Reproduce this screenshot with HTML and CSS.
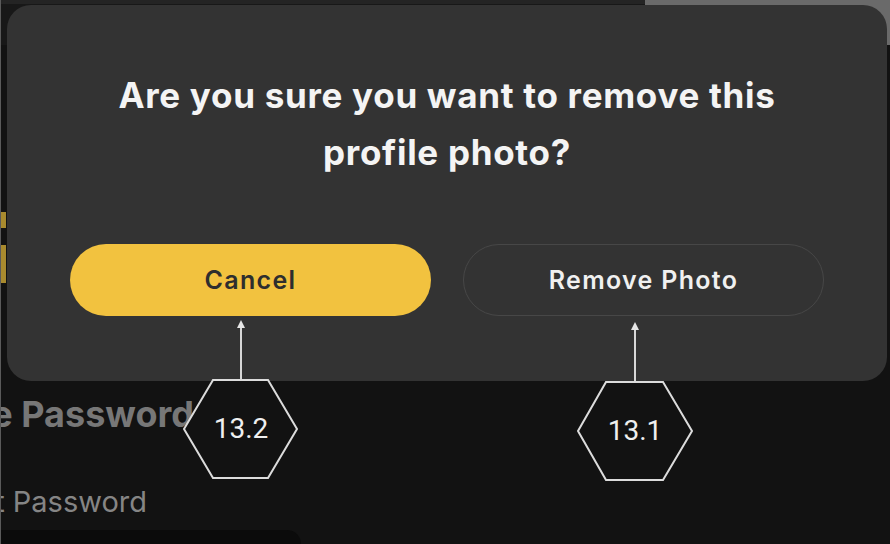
FILE: index.html
```html
<!DOCTYPE html>
<html lang="en">
<head>
<meta charset="utf-8">
<title>Remove profile photo</title>
<link rel="stylesheet" href="styles.css">
</head>
<body>
<div class="page">
  <div class="topbar"><div class="topbar-right"></div></div>
  <div class="marks">
    <div class="mark mark-a"></div>
    <div class="mark mark-b"></div>
  </div>
  <div class="settings">
    <div class="heading-row"><h2 class="heading">Change Password</h2></div>
    <div class="label-row"><span class="label">Current Password</span></div>
    <div class="input-stub"></div>
  </div>
</div>

<div class="dialog" role="dialog">
  <h1 class="dialog-title">Are you sure you want to remove this<br>profile photo?</h1>
  <div class="dialog-actions">
    <button class="btn btn-primary">Cancel</button>
    <button class="btn btn-outline">Remove Photo</button>
  </div>
</div>

<div class="callout callout-cancel">
  <svg class="callout-svg" width="120" height="164" viewBox="0 0 120 164">
    <line x1="60" y1="9" x2="60" y2="62" class="c-line"/>
    <polygon points="56,10 60,2 64,10" class="c-head"/>
    <polygon points="3,111 32,62 87,62 116,111 87,160 32,160" class="c-hex"/>
  </svg>
  <span class="callout-label">13.2</span>
</div>
<div class="callout callout-remove">
  <svg class="callout-svg" width="120" height="164" viewBox="0 0 120 164">
    <line x1="60" y1="9" x2="60" y2="62" class="c-line"/>
    <polygon points="56,10 60,2 64,10" class="c-head"/>
    <polygon points="3,111 31,62 88,62 117,111 88,160 31,160" class="c-hex"/>
  </svg>
  <span class="callout-label">13.1</span>
</div>
</body>
</html>
```

FILE: styles.css
```css
* { box-sizing: border-box; }
html, body { margin: 0; padding: 0; }
body {
  width: 890px;
  height: 544px;
  overflow: hidden;
  position: relative;
  background: #121212;
  font-family: Inter, "Noto Sans", "Liberation Sans", sans-serif;
  border-left: 1px solid #5a5a5a;
}
.page {
  display: flex;
  flex-direction: column;
  height: 100%;
}
.topbar {
  height: 45px;
  display: flex;
  justify-content: flex-end;
  background: #181818;
  border-top: 4px solid #242424;
}
.topbar-right {
  width: 245px;
  margin-top: -4px;
  background: #6a6a6a;
}
.marks {
  display: flex;
  flex-direction: column;
  gap: 17px;
  margin-top: 167px;
  width: 5px;
}
.mark { background: #a88a2e; }
.mark-a { height: 16px; }
.mark-b { height: 38px; }
.settings {
  display: flex;
  flex-direction: column;
  margin-top: 111px;
  flex: 1;
}
.heading-row {
  width: 193px;
  display: flex;
  justify-content: flex-end;
}
.heading {
  margin: 0;
  white-space: nowrap;
  font-size: 36px;
  line-height: 40px;
  font-weight: 700;
  color: #777777;
}
.label-row {
  width: 146px;
  display: flex;
  justify-content: flex-end;
  margin-top: 52px;
}
.label {
  white-space: nowrap;
  font-size: 29px;
  line-height: 32px;
  font-weight: 400;
  color: #858585;
}
.input-stub {
  margin-top: auto;
  width: 300px;
  height: 14px;
  background: #0b0b0b;
  border-top-right-radius: 14px;
}

/* modal overlay */
.dialog {
  position: absolute;
  left: 6px;
  top: 5px;
  width: 880px;
  height: 376px;
  background: #333333;
  border-radius: 24px;
  display: flex;
  flex-direction: column;
  align-items: center;
  padding-top: 62px;
}
.dialog-title {
  margin: 0;
  text-align: center;
  color: #f4f4f4;
  font-size: 35px;
  line-height: 57px;
  font-weight: 700;
  letter-spacing: 0.7px;
}
.dialog-actions {
  display: flex;
  gap: 32px;
  margin-top: 63px;
}
.btn {
  width: 361px;
  height: 72px;
  border-radius: 36px;
  font-family: Inter, "Noto Sans", "Liberation Sans", sans-serif;
  font-size: 25px;
  font-weight: 600;
  letter-spacing: 1.3px;
  cursor: pointer;
}
.btn-primary {
  background: #f2c23f;
  color: #2e2e2e;
  border: none;
}
.btn-outline {
  background: transparent;
  color: #f0f0f0;
  border: 1px solid #474747;
}

/* annotation callouts */
.callout {
  position: absolute;
  width: 120px;
  height: 164px;
}
.callout-cancel { left: 180px; top: 318px; }
.callout-remove { left: 574px; top: 320px; }
.callout-svg { display: block; }
.c-line { stroke: #d8d8d8; stroke-width: 2; }
.c-head { fill: #e6e6e6; }
.c-hex { fill: #121212; stroke: #dcdcdc; stroke-width: 2; stroke-linejoin: miter; }
.callout-label {
  position: absolute;
  left: 0;
  right: 0;
  top: 93px;
  text-align: center;
  font-family: Roboto, "Liberation Sans", sans-serif;
  font-size: 28px;
  line-height: 36px;
  color: #efefef;
}
```
